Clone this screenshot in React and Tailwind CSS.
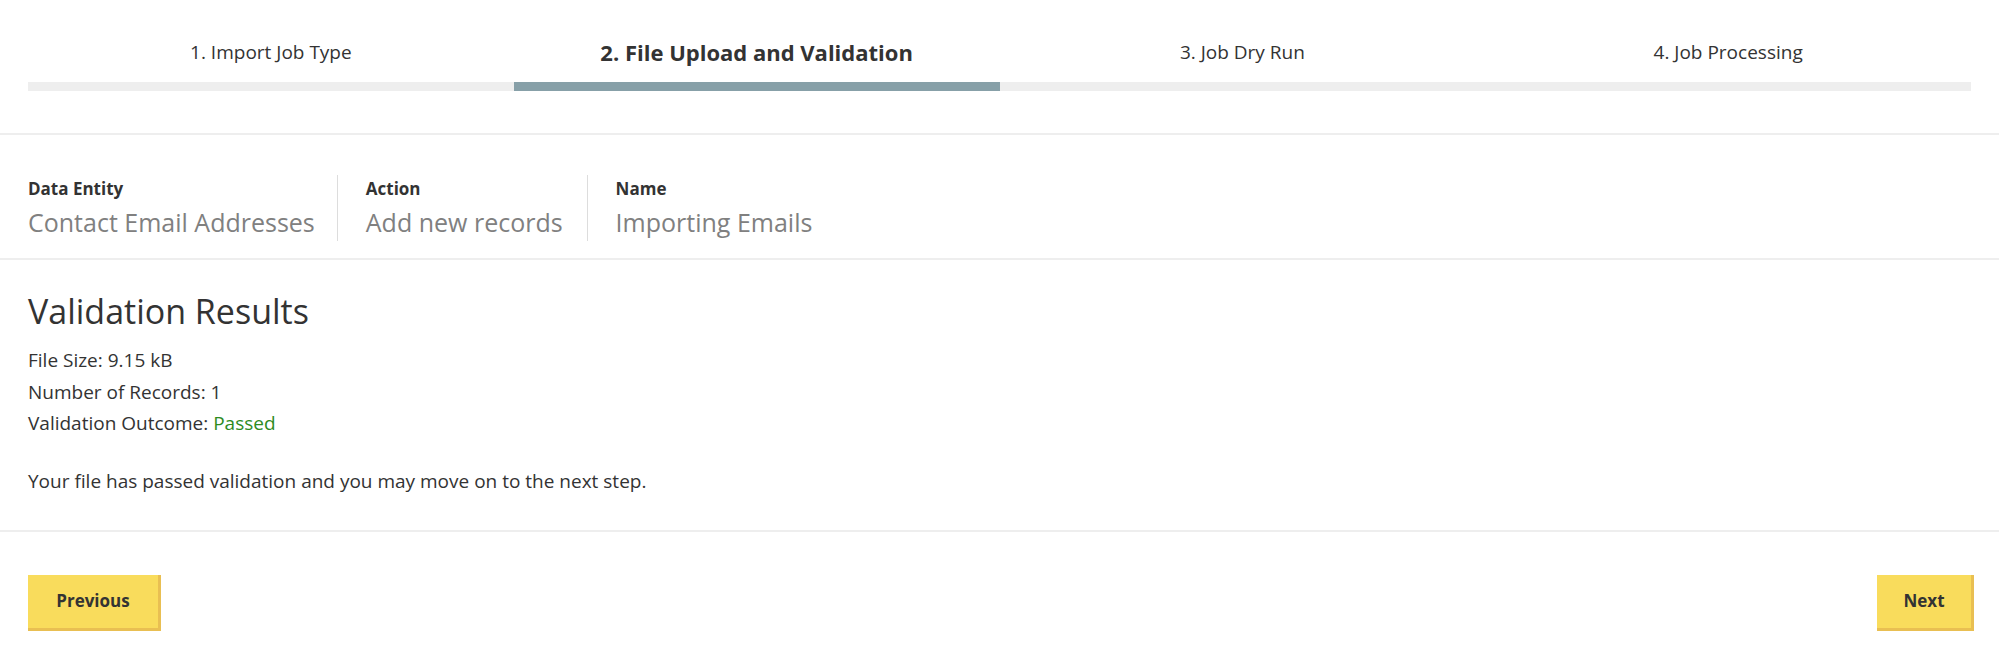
const steps = ["1. Import Job Type", "2. File Upload and Validation", "3. Job Dry Run", "4. Job Processing"];

const Info = ({ label, value, border }) => (
  <div className={`flex flex-col justify-center h-[66px] ${border ? "border-l border-[#ddd] pl-[28px] pr-[24px]" : "pr-[22px]"}`}>
    <div className="text-[17px] font-bold text-[#333] leading-[24px]">{label}</div>
    <div className="text-[25px] text-[#808080] leading-[34px] mt-[4px]">{value}</div>
  </div>
);

const Button = ({ children, className }) => (
  <button className={`h-[56px] bg-[#f9dc5c] border-r-[3px] border-b-[3px] border-[#e9bf52] text-[17px] font-bold text-[#333] ${className}`}>
    {children}
  </button>
);

export default function App() {
  return (
    <div className="w-[1999px] h-[658px] bg-white text-[#333]" style={{ fontFamily: "'Open Sans', Lato, sans-serif" }}>
      <div className="px-[28px] pt-[36px] pb-[42px] border-b-2 border-[#eee]">
        <div className="grid grid-cols-4">
          {steps.map((s, i) => (
            <div key={s} className="flex flex-col">
              <div className={`text-center h-[46px] leading-[32px] ${i === 1 ? "text-[22px] font-bold" : "text-[19px]"}`}>{s}</div>
              <div className={`h-[9px] ${i === 1 ? "bg-[#87a0a8]" : "bg-[#eee]"}`} />
            </div>
          ))}
        </div>
      </div>
      <div className="flex px-[28px] pt-[40px] pb-[17px] border-b-2 border-[#eee]">
        <Info label="Data Entity" value="Contact Email Addresses" />
        <Info label="Action" value="Add new records" border />
        <Info label="Name" value="Importing Emails" border />
      </div>
      <div className="px-[28px] pt-[29px] pb-[33px] border-b-2 border-[#eee]">
        <h1 className="text-[34px] leading-[44px]">Validation Results</h1>
        <div className="mt-[12px] text-[19px] leading-[31.5px]">
          <div>File Size: 9.15 kB</div>
          <div>Number of Records: 1</div>
          <div>Validation Outcome: <span className="text-[#2e8b1e]">Passed</span></div>
        </div>
        <p className="mt-[26px] text-[19px] leading-[31px]">Your file has passed validation and you may move on to the next step.</p>
      </div>
      <div className="flex justify-between px-[28px] pt-[43px]">
        <Button className="w-[133px]">Previous</Button>
        <Button className="w-[97px] mr-[-3px]">Next</Button>
      </div>
    </div>
  );
}
